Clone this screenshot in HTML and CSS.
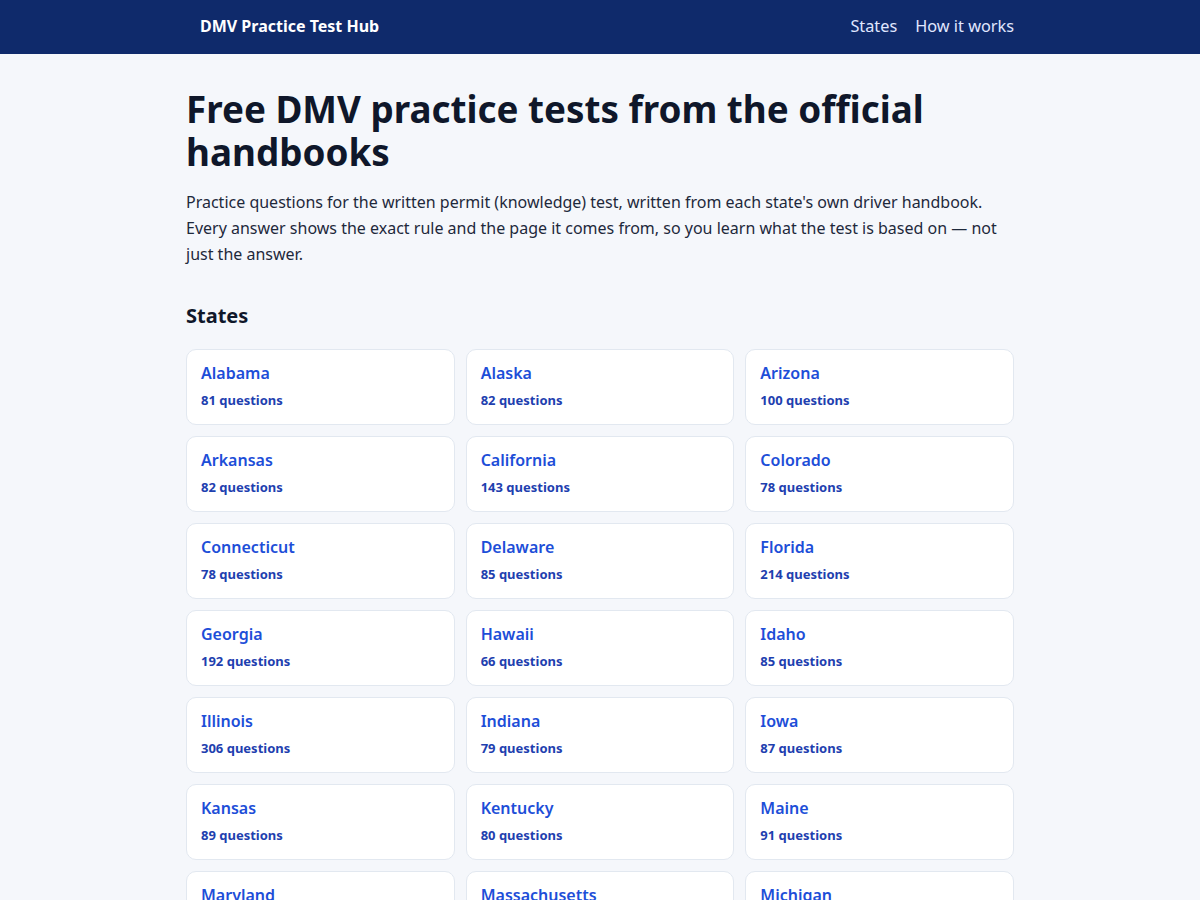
FILE: index.html
```html
<!DOCTYPE html>
<html lang="en">
<head>
<meta charset="utf-8">
<title>DMV Practice Test Hub</title>
<link rel="stylesheet" href="styles.css">
</head>
<body>
<header class="topbar">
  <div class="topbar-inner">
    <a class="brand" href="#">DMV Practice Test Hub</a>
    <nav class="nav">
      <a href="#">States</a>
      <a href="#">How it works</a>
    </nav>
  </div>
</header>
<main class="main">
  <h1 class="title">Free DMV practice tests from the official handbooks</h1>
  <p class="lead">Practice questions for the written permit (knowledge) test, written from each state's own driver handbook. Every answer shows the exact rule and the page it comes from, so you learn what the test is based on — not just the answer.</p>
  <h2 class="section">States</h2>
  <div class="grid">
    <a class="card" href="#"><span class="name">Alabama</span><span class="count">81 questions</span></a>
    <a class="card" href="#"><span class="name">Alaska</span><span class="count">82 questions</span></a>
    <a class="card" href="#"><span class="name">Arizona</span><span class="count">100 questions</span></a>
    <a class="card" href="#"><span class="name">Arkansas</span><span class="count">82 questions</span></a>
    <a class="card" href="#"><span class="name">California</span><span class="count">143 questions</span></a>
    <a class="card" href="#"><span class="name">Colorado</span><span class="count">78 questions</span></a>
    <a class="card" href="#"><span class="name">Connecticut</span><span class="count">78 questions</span></a>
    <a class="card" href="#"><span class="name">Delaware</span><span class="count">85 questions</span></a>
    <a class="card" href="#"><span class="name">Florida</span><span class="count">214 questions</span></a>
    <a class="card" href="#"><span class="name">Georgia</span><span class="count">192 questions</span></a>
    <a class="card" href="#"><span class="name">Hawaii</span><span class="count">66 questions</span></a>
    <a class="card" href="#"><span class="name">Idaho</span><span class="count">85 questions</span></a>
    <a class="card" href="#"><span class="name">Illinois</span><span class="count">306 questions</span></a>
    <a class="card" href="#"><span class="name">Indiana</span><span class="count">79 questions</span></a>
    <a class="card" href="#"><span class="name">Iowa</span><span class="count">87 questions</span></a>
    <a class="card" href="#"><span class="name">Kansas</span><span class="count">89 questions</span></a>
    <a class="card" href="#"><span class="name">Kentucky</span><span class="count">80 questions</span></a>
    <a class="card" href="#"><span class="name">Maine</span><span class="count">91 questions</span></a>
    <a class="card" href="#"><span class="name">Maryland</span><span class="count">84 questions</span></a>
    <a class="card" href="#"><span class="name">Massachusetts</span><span class="count">90 questions</span></a>
    <a class="card" href="#"><span class="name">Michigan</span><span class="count">88 questions</span></a>
  </div>
</main>
</body>
</html>
```
FILE: styles.css
```css
* { box-sizing: border-box; }
html, body { margin: 0; padding: 0; }
body {
  font-family: "Noto Sans", "Open Sans", sans-serif;
  background: #f5f7fb;
  color: #0f172a;
}
a { text-decoration: none; }
.topbar {
  background: #0f2a6b;
  height: 54px;
}
.topbar-inner {
  width: 828px;
  margin: 0 auto;
  height: 52px;
  display: flex;
  align-items: center;
  justify-content: space-between;
  padding-left: 14px;
}
.brand {
  color: #ffffff;
  font-weight: 700;
  font-size: 16px;
}
.nav {
  display: flex;
  gap: 18px;
}
.nav a {
  color: #e0e7ff;
  font-size: 16.3px;
}
.main {
  width: 828px;
  margin: 0 auto;
  padding-top: 34px;
}
.title {
  margin: 0;
  font-size: 36.8px;
  line-height: 43px;
  font-weight: 700;
  color: #0f172a;
}
.lead {
  margin: 15px 0 0;
  font-size: 16px;
  line-height: 26px;
  color: #1e293b;
}
.section {
  margin: 35px 0 0;
  font-size: 20px;
  line-height: 28px;
  font-weight: 700;
}
.grid {
  margin-top: 19px;
  display: grid;
  grid-template-columns: repeat(3, 1fr);
  gap: 11px;
}
.card {
  display: flex;
  flex-direction: column;
  background: #ffffff;
  border: 1px solid #e2e8f0;
  border-radius: 10px;
  padding: 12px 14px;
  height: 76px;
}
.name {
  font-size: 16px;
  line-height: 22px;
  font-weight: 600;
  color: #1d4ed8;
}
.count {
  margin-top: 6px;
  font-size: 13px;
  line-height: 20px;
  font-weight: 700;
  color: #1e40af;
}
```
